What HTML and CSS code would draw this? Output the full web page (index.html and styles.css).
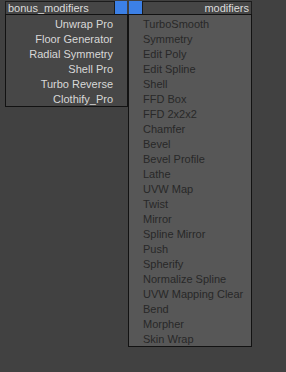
FILE: index.html
```html
<!DOCTYPE html>
<html lang="en">

<head>
    <meta charset="UTF-8">
    <meta name="viewport" content="width=device-width, initial-scale=1.0">
    <title>Modifier Sets</title>
    <link rel="stylesheet" href="styles.css">
</head>

<body>
    <div class="menus">
        <div class="col left">
            <div class="head">
                <span class="label">bonus_modifiers</span>
                <span class="swatch"></span>
            </div>
            <ul class="list bonus">
                <li>Unwrap Pro</li>
                <li>Floor Generator</li>
                <li>Radial Symmetry</li>
                <li>Shell Pro</li>
                <li>Turbo Reverse</li>
                <li>Clothify_Pro</li>
            </ul>
        </div>
        <div class="col right">
            <div class="head">
                <span class="swatch"></span>
                <span class="label">modifiers</span>
            </div>
            <ul class="list mods">
                <li>TurboSmooth</li>
                <li>Symmetry</li>
                <li>Edit Poly</li>
                <li>Edit Spline</li>
                <li>Shell</li>
                <li>FFD Box</li>
                <li>FFD 2x2x2</li>
                <li>Chamfer</li>
                <li>Bevel</li>
                <li>Bevel Profile</li>
                <li>Lathe</li>
                <li>UVW Map</li>
                <li>Twist</li>
                <li>Mirror</li>
                <li>Spline Mirror</li>
                <li>Push</li>
                <li>Spherify</li>
                <li>Normalize Spline</li>
                <li>UVW Mapping Clear</li>
                <li>Bend</li>
                <li>Morpher</li>
                <li>Skin Wrap</li>
            </ul>
        </div>
    </div>
</body>

</html>
```

FILE: styles.css
```css
body {
    margin: 0;
    height: 372px;
    background-color: #414141;
    font-family: "Liberation Sans", Arial, sans-serif;
    font-size: 11px;
}

.menus {
    display: flex;
    align-items: flex-start;
    padding-top: 1px;
    padding-left: 5px;
}

.left {
    width: 123px;
}

.right {
    width: 124px;
}

.head {
    display: flex;
    height: 13px;
    line-height: 13px;
}

.left .head {
    width: 122px;
}

.head .label {
    flex: 1;
    background-color: #464646;
    color: #dcdcdc;
    border: 1px solid #1c1c1c;
    border-bottom: none;
    padding: 0 2px;
}

.right .head .label {
    text-align: right;
}

.swatch {
    width: 12px;
    background-color: #3c80e6;
}

.right .swatch {
    width: 13px;
    margin-left: 1px;
}

.list {
    list-style: none;
    margin: 0;
    padding: 1px 0 0;
    border: 1px solid #121212;
}

.list li {
    height: 15px;
    line-height: 16px;
    white-space: nowrap;
}

.bonus {
    background-color: #474747;
    color: #d8d8d8;
    text-align: right;
    padding-right: 14px;
}

.mods {
    background-color: #575757;
    color: #282828;
    padding-left: 14px;
}
```
